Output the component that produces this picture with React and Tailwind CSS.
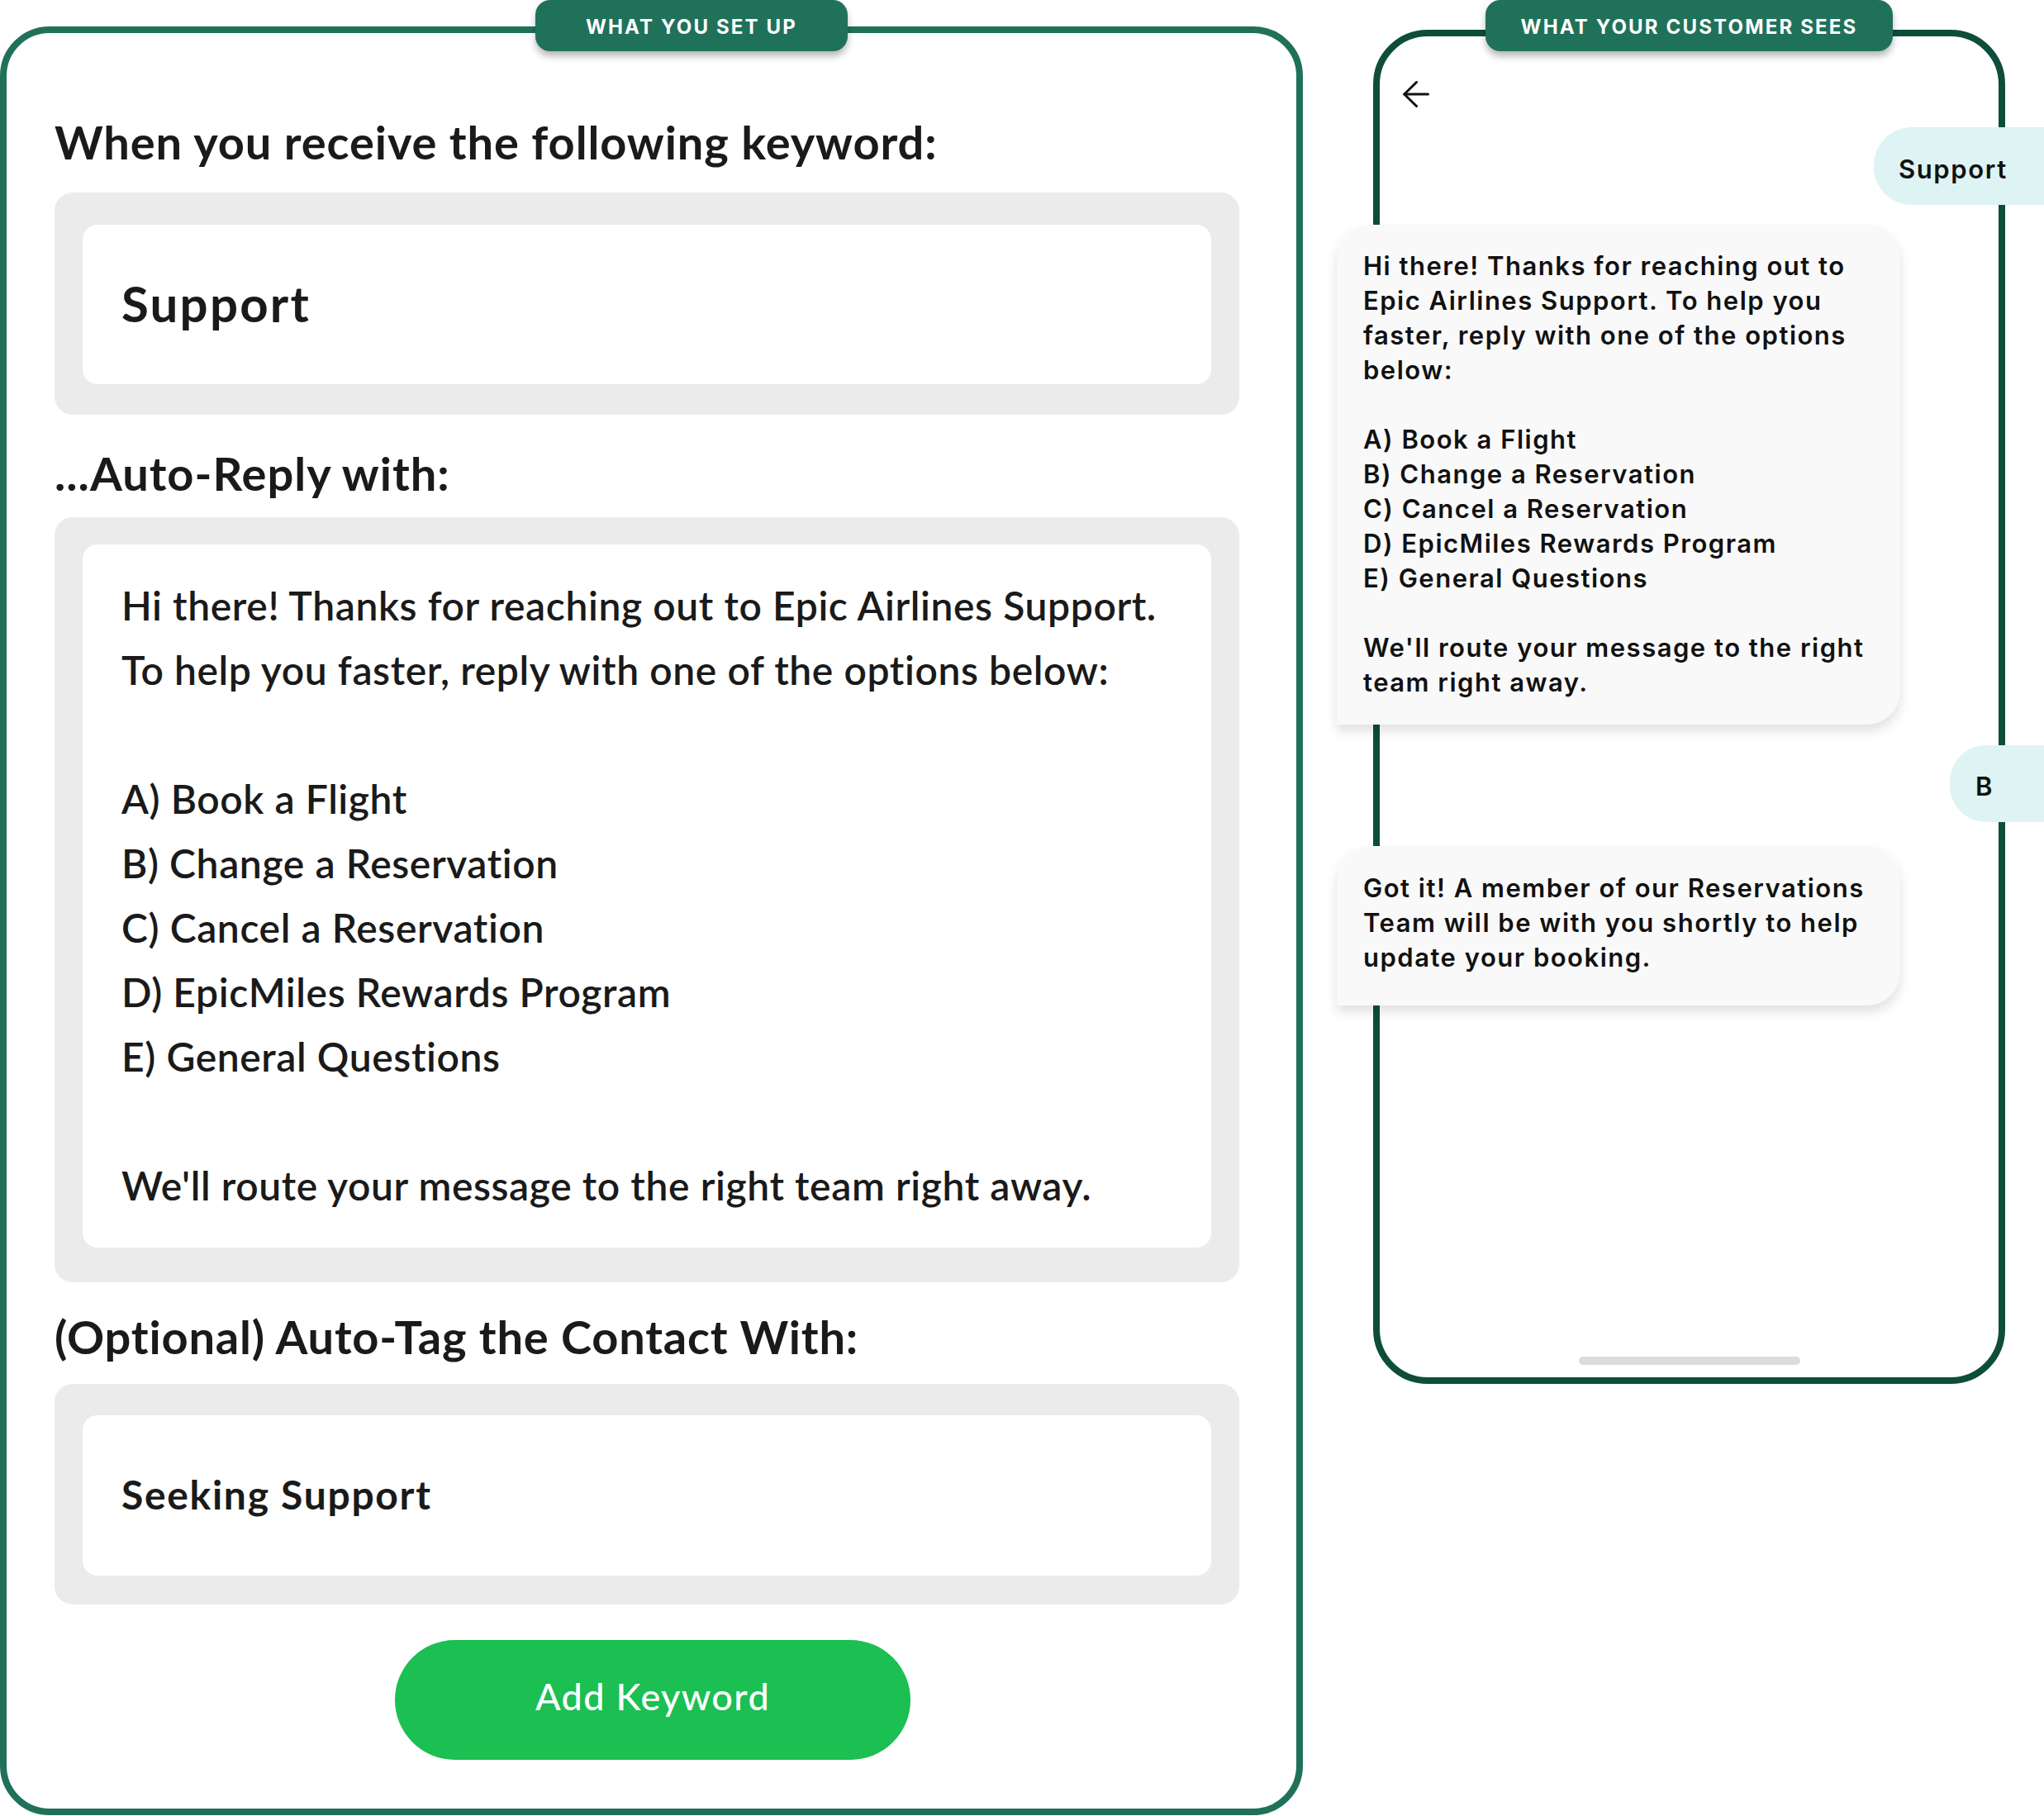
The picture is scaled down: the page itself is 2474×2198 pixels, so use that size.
import React from "react";

const LEFT_FONT = { fontFamily: "Lato, 'Noto Sans', sans-serif" };
const PHONE_FONT = { fontFamily: "Inter, 'Noto Sans', sans-serif" };

const replyText = `Hi there! Thanks for reaching out to Epic Airlines Support.
To help you faster, reply with one of the options below:

A) Book a Flight
B) Change a Reservation
C) Cancel a Reservation
D) EpicMiles Rewards Program
E) General Questions

We'll route your message to the right team right away.`;

const bubble1 = `Hi there! Thanks for reaching out to
Epic Airlines Support. To help you
faster, reply with one of the options
below:

A) Book a Flight
B) Change a Reservation
C) Cancel a Reservation
D) EpicMiles Rewards Program
E) General Questions

We'll route your message to the right
team right away.`;

const bubble2 = `Got it! A member of our Reservations
Team will be with you shortly to help
update your booking.`;

function Tag({ children, className }) {
  return (
    <div
      className={
        "absolute flex items-center justify-center rounded-[18px] bg-[#20715a] pt-[3px] text-white font-bold text-[24px] tracking-[0.09em] shadow-[0_6px_8px_rgba(0,0,0,0.28)] " +
        className
      }
      style={PHONE_FONT}
    >
      {children}
    </div>
  );
}

export default function App() {
  return (
    <div className="relative flex items-start w-[2474px] h-[2198px] overflow-hidden bg-white">
      {/* LEFT PANEL */}
      <div
        className="relative mt-[32px] w-[1577px] h-[2165px] shrink-0 rounded-[60px] border-[8px] border-[#20715a] flex flex-col pl-[58px] pr-[69px] text-[#1a1a1a]"
        style={LEFT_FONT}
      >
        <Tag className="top-[-40px] left-[640px] w-[378px] h-[62px]">WHAT YOU SET UP</Tag>

        <div className="mt-[98px] text-[56px] leading-[68px] font-bold tracking-[0.9px]">
          When you receive the following keyword:
        </div>
        <div className="mt-[27px] rounded-[22px] bg-[#ebebeb] px-[34px] pt-[39px] pb-[37px]">
          <div className="flex h-[193px] items-center rounded-[18px] bg-white pl-[47px] pb-[4px] text-[60px] font-bold tracking-[2.2px]">
            Support
          </div>
        </div>

        <div className="mt-[37px] text-[56px] leading-[68px] font-bold tracking-[1px]">...Auto-Reply with:</div>
        <div className="mt-[19px] rounded-[22px] bg-[#ebebeb] px-[34px] pt-[33px] pb-[42px]">
          <div className="rounded-[18px] bg-white pl-[47px] pt-[35px] pb-[36px] text-[48px] leading-[78px] font-semibold tracking-[0.6px] whitespace-pre-line">
            {replyText}
          </div>
        </div>

        <div className="mt-[32px] text-[56px] leading-[68px] font-bold tracking-[0.8px]">
          (Optional) Auto-Tag the Contact With:
        </div>
        <div className="mt-[23px] rounded-[22px] bg-[#ebebeb] px-[34px] pt-[38px] pb-[35px]">
          <div className="flex h-[194px] items-center rounded-[18px] bg-white pl-[47px] pb-[2px] text-[48px] font-bold tracking-[1.7px]">
            Seeking Support
          </div>
        </div>

        <button className="mt-[43px] ml-[412px] flex h-[145px] w-[624px] items-center justify-center rounded-full bg-[#1bbf52] pb-[8px] text-[45px] font-medium tracking-[1.4px] text-white">
          Add Keyword
        </button>
      </div>

      {/* PHONE */}
      <div
        className="relative ml-[85px] mt-[36px] w-[765px] h-[1639px] shrink-0 rounded-[66px] border-[8px] border-[#0e4d3b] flex flex-col text-[#111]"
        style={PHONE_FONT}
      >
        <Tag className="top-[-44px] left-[128px] w-[493px] h-[62px]">WHAT YOUR CUSTOMER SEES</Tag>

        <svg
          className="ml-[28px] mt-[54px] h-[32px] w-[32px] shrink-0"
          viewBox="0 0 32 32"
          fill="none"
          stroke="#111"
          strokeWidth="3"
          strokeLinecap="round"
          strokeLinejoin="round"
        >
          <path d="M30.5 16H1.8" />
          <path d="M16.5 1.5L1.8 16L16.5 30.5" />
        </svg>

        <div className="mt-[24px] ml-[598px] flex h-[94px] w-[300px] shrink-0 items-center rounded-l-[46px] bg-[#def3f3] pl-[30px] pt-[8px] text-[31px] font-semibold tracking-[1.6px]">
          Support
        </div>

        <div className="mt-[24px] -ml-[52px] w-[682px] shrink-0 rounded-[40px] rounded-bl-none bg-[#f9f9f9] pl-[32px] pt-[29px] pb-[30px] text-[31px] leading-[42px] font-semibold tracking-[1.5px] whitespace-pre-line shadow-[0_8px_14px_rgba(0,0,0,0.12)]">
          {bubble1}
        </div>

        <div className="mt-[25px] ml-[690px] flex h-[93px] w-[150px] shrink-0 items-center rounded-l-[44px] bg-[#def3f3] pl-[31px] pt-[7px] text-[31px] font-semibold">
          B
        </div>

        <div className="mt-[29px] -ml-[52px] w-[682px] shrink-0 rounded-[40px] rounded-bl-none bg-[#f9f9f9] pl-[32px] pt-[30px] pb-[37px] text-[31px] leading-[42px] font-semibold tracking-[1.5px] whitespace-pre-line shadow-[0_8px_14px_rgba(0,0,0,0.12)]">
          {bubble2}
        </div>

        <div className="mt-auto mb-[15px] h-[10px] w-[268px] self-center rounded-full bg-[#dcdcdc]" />
      </div>
    </div>
  );
}
